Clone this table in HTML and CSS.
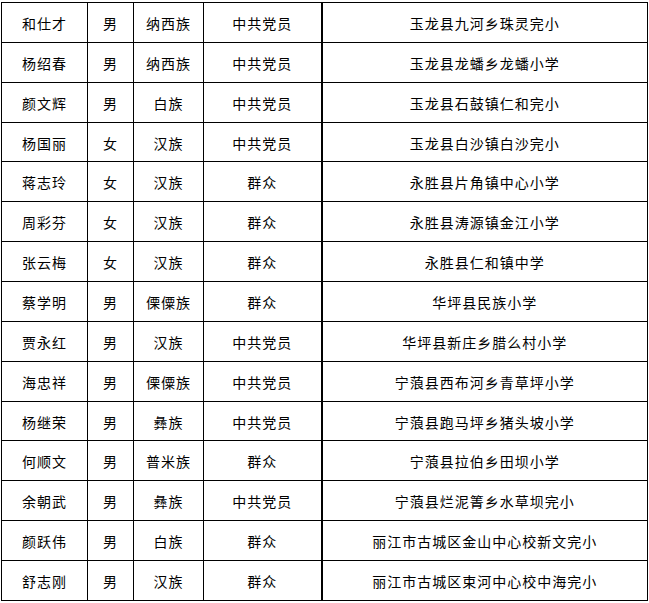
FILE: index.html
```html
<!DOCTYPE html>
<html lang="zh-CN">
<head>
<meta charset="utf-8">
<title>名单</title>
<link rel="stylesheet" href="styles.css">
</head>
<body>
<table class="roster">
  <colgroup>
    <col class="c-name"><col class="c-sex"><col class="c-eth"><col class="c-party"><col class="c-school">
  </colgroup>
  <tbody>
    <tr><td>和仕才</td><td>男</td><td>纳西族</td><td>中共党员</td><td class="school">玉龙县九河乡珠灵完小</td></tr>
    <tr><td>杨绍春</td><td>男</td><td>纳西族</td><td>中共党员</td><td class="school">玉龙县龙蟠乡龙蟠小学</td></tr>
    <tr><td>颜文辉</td><td>男</td><td>白族</td><td>中共党员</td><td class="school">玉龙县石鼓镇仁和完小</td></tr>
    <tr><td>杨国丽</td><td>女</td><td>汉族</td><td>中共党员</td><td class="school">玉龙县白沙镇白沙完小</td></tr>
    <tr><td>蒋志玲</td><td>女</td><td>汉族</td><td>群众</td><td class="school">永胜县片角镇中心小学</td></tr>
    <tr><td>周彩芬</td><td>女</td><td>汉族</td><td>群众</td><td class="school">永胜县涛源镇金江小学</td></tr>
    <tr><td>张云梅</td><td>女</td><td>汉族</td><td>群众</td><td class="school">永胜县仁和镇中学</td></tr>
    <tr><td>蔡学明</td><td>男</td><td>傈僳族</td><td>群众</td><td class="school">华坪县民族小学</td></tr>
    <tr><td>贾永红</td><td>男</td><td>汉族</td><td>中共党员</td><td class="school">华坪县新庄乡腊么村小学</td></tr>
    <tr><td>海忠祥</td><td>男</td><td>傈僳族</td><td>中共党员</td><td class="school">宁蒗县西布河乡青草坪小学</td></tr>
    <tr><td>杨继荣</td><td>男</td><td>彝族</td><td>中共党员</td><td class="school">宁蒗县跑马坪乡猪头坡小学</td></tr>
    <tr><td>何顺文</td><td>男</td><td>普米族</td><td>群众</td><td class="school">宁蒗县拉伯乡田坝小学</td></tr>
    <tr><td>余朝武</td><td>男</td><td>彝族</td><td>中共党员</td><td class="school">宁蒗县烂泥箐乡水草坝完小</td></tr>
    <tr><td>颜跃伟</td><td>男</td><td>白族</td><td>群众</td><td class="school">丽江市古城区金山中心校新文完小</td></tr>
    <tr><td>舒志刚</td><td>男</td><td>汉族</td><td>群众</td><td class="school">丽江市古城区束河中心校中海完小</td></tr>
  </tbody>
</table>
</body>
</html>
```
FILE: styles.css
```css
html, body {
  margin: 0;
  padding: 0;
  background: #ffffff;
}
body {
  padding: 2px 0 0 1px;
}
.roster {
  border-collapse: collapse;
  table-layout: fixed;
  width: 646px;
  height: 599px;
  font-family: "Noto Sans CJK SC", "Noto Sans", sans-serif;
  font-size: 14px;
  letter-spacing: 1px;
  color: #000000;
}
.c-name { width: 86px; }
.c-sex { width: 46px; }
.c-eth { width: 70px; }
.c-party { width: 118px; }
.c-school { width: 326px; }
.roster td {
  border: 1px solid #000000;
  text-align: center;
  vertical-align: middle;
  padding: 1px 0 0 0;
  line-height: 16px;
  white-space: nowrap;
}
.roster td.school {
  border-left: 2px solid #000000;
}
```
